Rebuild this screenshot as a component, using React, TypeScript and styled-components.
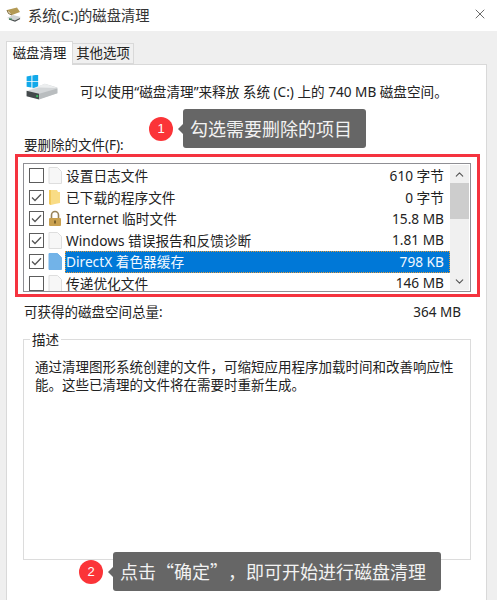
import styled, { createGlobalStyle } from "styled-components";
import { X, ChevronUp, ChevronDown } from "lucide-react";

const GlobalStyle = createGlobalStyle`
    html, body{
        margin: 0;
        padding: 0;
        background: #ffffff;
    }
    *{
        box-sizing: border-box;
    }
`;

const Page = styled.div`
    position: relative;
    width: 497px;
    height: 600px;
    overflow: hidden;
    display: flex;
    flex-direction: column;
    font-family: "Noto Sans", "Noto Sans CJK SC", sans-serif;
    font-size: 13.5px;
    color: #222;
`;

const TitleBar = styled.div`
    height: 31px;
    flex: none;
    background: #fff;
    display: flex;
    align-items: center;
    padding: 0 9px 3px 6px;
    gap: 5px;
    font-size: 14.3px;
    color: #333;
    span{
        flex: 1;
    }
    svg.close{
        color: #444;
    }
`;

const Body = styled.div`
    flex: 1;
    background: #efefef;
    padding: 10px 10px 0 6px;
    display: flex;
    flex-direction: column;
    min-height: 0;
`;

const Tabs = styled.div`
    display: flex;
    height: 23px;
    flex: none;
    align-items: flex-end;
`;

const Tab = styled.div<{ active?: boolean }>`
    height: ${props => props.active ? "24px" : "21px"};
    width: ${props => props.active ? "67px" : "61px"};
    margin-bottom: ${props => props.active ? "-1px" : "0"};
    position: relative;
    z-index: ${props => props.active ? 1 : 0};
    background: ${props => props.active ? "#fff" : "#f0f0f0"};
    border: 1px solid #d9d9d9;
    border-bottom: ${props => props.active ? "none" : "1px solid #d9d9d9"};
    border-left: ${props => props.active ? "1px solid #d9d9d9" : "none"};
    display: flex;
    align-items: center;
    justify-content: center;
    font-size: 13.4px;
    line-height: 1;
    white-space: nowrap;
`;

const Panel = styled.div`
    flex: 1;
    background: #fff;
    border: 1px solid #d9d9d9;
    border-bottom: none;
    padding: 11px 9px 0 8px;
    display: flex;
    flex-direction: column;
    min-height: 0;
`;

const Summary = styled.div`
    display: flex;
    height: 38px;
    flex: none;
    padding-left: 10px;
    gap: 21px;
    align-items: flex-start;
    svg{
        margin-top: -1px;
    }
    p{
        margin: 7px 0 0;
        line-height: 18px;
        font-size: 13.6px;
        white-space: nowrap;
    }
`;

const SectionLabel = styled.div`
    height: 40px;
    flex: none;
    padding-top: 22px;
    line-height: 18px;
    margin-left: 9px;
    white-space: nowrap;
`;

const RedFrame = styled.div`
    height: 143px;
    width: 465px;
    flex: none;
    border: 3px solid #f5333f;
    padding: 6px 6px 2px 5px;
`;

const ListBox = styled.div`
    height: 100%;
    border: 1px solid #8f8f94;
    display: flex;
    background: #fff;
    overflow: hidden;
`;

const Rows = styled.div`
    flex: 1;
    min-width: 0;
    padding: 1px 0 0 5px;
`;

const Row = styled.div`
    display: flex;
    align-items: center;
    height: 21.5px;
`;

const Check = styled.div`
    width: 15px;
    height: 15px;
    flex: none;
    border: 1px solid #5c5c5c;
    background: #fff;
    display: flex;
    align-items: center;
    justify-content: center;
`;

const FileGlyph = styled.svg`
    width: 14px;
    height: 17px;
    flex: none;
    margin: 0 3px 0 4px;
`;

const RowBody = styled.div<{ selected?: boolean }>`
    flex: 1;
    height: 100%;
    min-width: 0;
    display: flex;
    align-items: center;
    justify-content: space-between;
    padding: 0 6px 1px 1px;
    background: ${props => props.selected ? "#0078d7" : "transparent"};
    color: ${props => props.selected ? "#f2f8ff" : "#222"};
    outline: ${props => props.selected ? "1px dotted #e39a3b" : "none"};
    outline-offset: -1px;
    font-size: 13.7px;
    white-space: nowrap;
`;

const ScrollBar = styled.div`
    width: 19px;
    flex: none;
    background: #f0f0f0;
    display: flex;
    flex-direction: column;
    align-items: center;
    justify-content: space-between;
    color: #555;
    margin: 1px 1px 1px 0;
`;

const ScrollButton = styled.div`
    height: 18px;
    display: flex;
    align-items: center;
    justify-content: center;
`;

const ScrollThumb = styled.div`
    width: 100%;
    height: 36px;
    background: #cdcdcd;
`;

const ScrollTrack = styled.div`
    flex: 1;
    width: 100%;
`;

const TotalRow = styled.div`
    display: flex;
    justify-content: space-between;
    height: 18px;
    line-height: 18px;
    flex: none;
    margin-top: 6px;
    padding: 0 16px 0 9px;
`;

const DescBox = styled.div`
    position: relative;
    margin: 18px 0 0 8px;
    height: 221px;
    width: 448px;
    flex: none;
    border: 1px solid #dcdcdc;
    padding: 18px 10px 0 11px;
    line-height: 18px;
`;

const Legend = styled.span`
    position: absolute;
    left: 6px;
    top: -9px;
    padding: 0 2px;
    background: #fff;
    line-height: 18px;
`;

const Callout = styled.div<{ x: number; y: number }>`
    position: absolute;
    left: ${props => props.x}px;
    top: ${props => props.y}px;
    display: flex;
    align-items: center;
`;

const Badge = styled.div`
    width: 24px;
    height: 24px;
    border-radius: 50%;
    background: #fb3438;
    color: #fff;
    font-size: 13px;
    font-family: "Liberation Sans", sans-serif;
    display: flex;
    align-items: center;
    justify-content: center;
`;

const Bubble = styled.div<{ w: number }>`
    position: relative;
    margin-left: 10px;
    width: ${props => props.w}px;
    height: 39px;
    background: #666;
    border-radius: 3px;
    color: #f2f2f2;
    font-family: "Noto Sans CJK SC", sans-serif;
    font-size: 18px;
    line-height: 39px;
    padding-left: 7px;
    white-space: nowrap;
    text-spacing-trim: space-all;
    font-feature-settings: "palt" 0, "chws" 0;
    &::before{
        content: "";
        position: absolute;
        left: -5px;
        top: 15px;
        border-style: solid;
        border-width: 5px 5px 5px 0;
        border-color: transparent #666 transparent transparent;
    }
`;

type FileKind = "page" | "folder" | "lock" | "blue";

type FileRow = {
    name: string;
    size: string;
    checked: boolean;
    kind: FileKind;
    selected?: boolean;
};

const files: FileRow[] = [
    { name: "设置日志文件", size: "610 字节", checked: false, kind: "page" },
    { name: "已下载的程序文件", size: "0 字节", checked: true, kind: "folder" },
    { name: "Internet 临时文件", size: "15.8 MB", checked: true, kind: "lock" },
    { name: "Windows 错误报告和反馈诊断", size: "1.81 MB", checked: true, kind: "page" },
    { name: "DirectX 着色器缓存", size: "798 KB", checked: true, kind: "blue", selected: true },
    { name: "传递优化文件", size: "146 MB", checked: false, kind: "page" },
];

const BroomIcon = () => (
    <svg width="17" height="16" viewBox="0 0 17 16">
        <path d="M1 12 L7 9 L15 11 L9 14.5 Z" fill="#cfd3d3" />
        <path d="M3 13 L9 15 L14 12.5" fill="none" stroke="#4a4f4f" strokeWidth="1.2" />
        <path d="M1 4 L11 1.5 L14 6 L6 9 Z" fill="#b39a55" />
        <path d="M1 4 L2.5 7.5 L6 9" fill="none" stroke="#7a6430" strokeWidth="1" />
        <rect x="3" y="12.5" width="3" height="1" fill="#2f8f55" />
    </svg>
);

const DriveIcon = () => (
    <svg width="34" height="25" viewBox="0 0 34 26">
        <path d="M1 1.5 L6 .6 V6.4 H1 Z M7 .4 L13 -.4 V6.4 H7 Z M1 7.4 H6 V13 L1 12.2 Z M7 7.4 H13 V14 L7 13.2 Z" fill="#12a9ea" />
        <path d="M1 17 L20 9 L33 13 L33 19 L14 25 L1 22 Z" fill="#d3d6d8" />
        <path d="M1 16.5 L14 13 L33 13.5 L20 9 Z" fill="#eceeef" />
        <path d="M1 16.5 L14 19.5 L14 25.5 L1 22 Z" fill="#444a4c" />
        <path d="M14 19.5 L33 14 L33 19 L14 25.5 Z" fill="#b9bdbf" />
        <rect x="11" y="21" width="2" height="2" fill="#35c25e" />
    </svg>
);

const KindIcon = ({ kind }: { kind: FileKind }) => {
    if (kind === "folder") {
        return (
            <FileGlyph viewBox="0 0 14 17">
                <path d="M1 1 H9 L10 3 H12 V14 L7 15 L3 16 L1 15 Z" fill="#f9dc85" />
                <path d="M1 1 H3 V16 L1 15 Z" fill="#f2c95c" />
            </FileGlyph>
        );
    }
    if (kind === "lock") {
        return (
            <FileGlyph viewBox="0 0 14 17">
                <path d="M3.5 8 V5 a3.5 3.5 0 0 1 7 0 V8" fill="none" stroke="#98835a" strokeWidth="1.6" />
                <rect x="1" y="8" width="12" height="8" rx="1" fill="#c9a04f" />
                <rect x="6" y="10.5" width="2" height="3" fill="#7c6128" />
            </FileGlyph>
        );
    }
    const blue = kind === "blue";
    return (
        <FileGlyph viewBox="0 0 14 17">
            <path
                d="M1 .5 H9.5 L13.5 4.5 V16.5 H1 Z"
                fill={blue ? "#72b3e8" : "#f7f7f7"}
                stroke={blue ? "#72b3e8" : "#dedede"}
            />
        </FileGlyph>
    );
};

const CheckMark = () => (
    <svg width="11" height="9" viewBox="0 0 11 9">
        <path d="M1 4.5 L4 7.5 L10 1.2" fill="none" stroke="#555" strokeWidth="1.3" />
    </svg>
);

const App = () => {
    return (
        <Page>
            <GlobalStyle />
            <TitleBar>
                <BroomIcon />
                <span>系统(C:)的磁盘清理</span>
                <X className="close" size={16} strokeWidth={1.2} />
            </TitleBar>
            <Body>
                <Tabs>
                    <Tab active>磁盘清理</Tab>
                    <Tab>其他选项</Tab>
                </Tabs>
                <Panel>
                    <Summary>
                        <DriveIcon />
                        <p>可以使用“磁盘清理”来释放 系统 (C:) 上的 740 MB 磁盘空间。</p>
                    </Summary>
                    <SectionLabel>要删除的文件(F):</SectionLabel>
                    <RedFrame>
                        <ListBox>
                            <Rows>
                                {files.map(file => (
                                    <Row key={file.name}>
                                        <Check>{file.checked && <CheckMark />}</Check>
                                        <KindIcon kind={file.kind} />
                                        <RowBody selected={file.selected}>
                                            <span>{file.name}</span>
                                            <span>{file.size}</span>
                                        </RowBody>
                                    </Row>
                                ))}
                            </Rows>
                            <ScrollBar>
                                <ScrollButton><ChevronUp size={13} strokeWidth={2} /></ScrollButton>
                                <ScrollThumb />
                                <ScrollTrack />
                                <ScrollButton><ChevronDown size={13} strokeWidth={2} /></ScrollButton>
                            </ScrollBar>
                        </ListBox>
                    </RedFrame>
                    <TotalRow>
                        <span>可获得的磁盘空间总量:</span>
                        <span>364 MB</span>
                    </TotalRow>
                    <DescBox>
                        <Legend>描述</Legend>
                        通过清理图形系统创建的文件，可缩短应用程序加载时间和改善响应性能。这些已清理的文件将在需要时重新生成。
                    </DescBox>
                </Panel>
            </Body>
            <Callout x={149} y={109}>
                <Badge>1</Badge>
                <Bubble w={183}>勾选需要删除的项目</Bubble>
            </Callout>
            <Callout x={79} y={552}>
                <Badge>2</Badge>
                <Bubble w={328}>点击“确定”，即可开始进行磁盘清理</Bubble>
            </Callout>
        </Page>
    );
};

export default App;
